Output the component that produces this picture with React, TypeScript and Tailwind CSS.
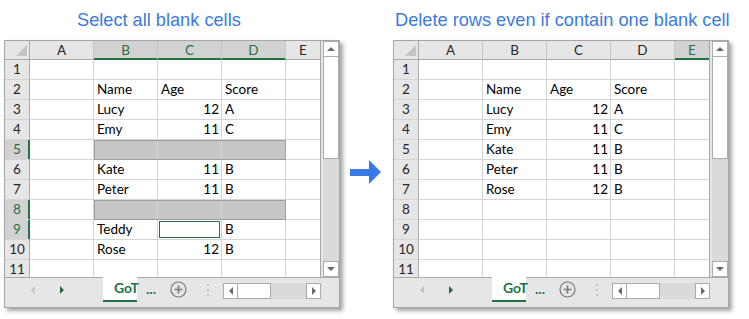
import clsx from 'clsx';

type Cell = string | number | null;

const COLS = ['A', 'B', 'C', 'D', 'E'];

interface SheetProps {
  data: Record<number, Cell[]>;
  selCols?: string[];
  selRows?: number[];
  grayRows?: number[];
  active?: { row: number; col: number };
}

function Tri({ dir, color }: { dir: 'left' | 'right' | 'up' | 'down'; color: string }) {
  const paths = { left: 'M4 0L0 4L4 8Z', right: 'M0 0L4 4L0 8Z', up: 'M0 4L4 0L8 4Z', down: 'M0 0L8 0L4 4Z' };
  const horiz = dir === 'left' || dir === 'right';
  return (
    <svg width={horiz ? 4 : 8} height={horiz ? 8 : 4} viewBox={horiz ? '0 0 4 8' : '0 0 8 4'}>
      <path d={paths[dir]} fill={color} />
    </svg>
  );
}

function Sheet({ data, selCols = [], selRows = [], grayRows = [], active }: SheetProps) {
  const rows = Array.from({ length: 11 }, (_, i) => i + 1);

  return (
    <div className="w-[336px] h-[268px] border border-[#a6a6a6] bg-[#e6e6e6] shadow-[3px_3px_4px_rgba(0,0,0,0.35)] flex flex-col">
      <div className="flex h-[236px]">
        {/* grid */}
        <div className="w-[316px] h-full overflow-hidden bg-white border-r border-[#a6a6a6] text-[13.5px]">
          {/* column headers */}
          <div className="flex h-[19px]">
            <div className="w-[25px] shrink-0 bg-[#e6e6e6] border-r border-b border-[#ababab] flex items-end justify-end pr-[2px] pb-[3px]">
              <svg width="11" height="11" viewBox="0 0 11 11">
                <path d="M11 0L11 11L0 11Z" fill="#c3c3c3" />
              </svg>
            </div>
            {COLS.map((c, i) => {
              const sel = selCols.includes(c);
              return (
                <div
                  key={c}
                  className={clsx(
                    'shrink-0 border-b flex justify-center leading-[18px]',
                    i < 4 ? 'w-[64px] border-r border-[#c6c6c6]' : 'w-[34px] border-[#c6c6c6]',
                    sel
                      ? 'bg-[#d2d2d2] text-[#217346] border-b-[#217346] shadow-[inset_0_-1px_0_#217346]'
                      : 'bg-[#e6e6e6] text-[#262626] border-b-[#ababab]'
                  )}
                >
                  {c}
                </div>
              );
            })}
          </div>

          {rows.map(r => {
            const sel = selRows.includes(r);
            const gray = grayRows.includes(r);
            const vals = data[r] || [];
            return (
              <div key={r} className="relative flex h-[20px]">
                <div
                  className={clsx(
                    'w-[25px] shrink-0 border-r border-b border-[#d4d4d4] text-center leading-[19px]',
                    sel
                      ? 'bg-[#d2d2d2] text-[#217346] border-r-[#217346] shadow-[inset_-1px_0_0_#217346]'
                      : 'bg-[#e6e6e6] text-[#262626] border-r-[#ababab]'
                  )}
                >
                  {r}
                </div>
                {COLS.map((_, ci) => {
                  const v = vals[ci] ?? null;
                  const isNum = typeof v === 'number';
                  const isActive = active && active.row === r && active.col === ci;
                  return (
                    <div
                      key={ci}
                      className={clsx(
                        'shrink-0 border-b border-[#d4d4d4] leading-[19px] text-black whitespace-nowrap overflow-hidden',
                        ci < 4 ? 'w-[64px] border-r' : 'w-[34px]',
                        isNum ? 'text-right pr-[2px]' : 'pl-[3px]',
                        gray && ci > 0 && ci < 4 && 'bg-[#c6c6c6]',
                        isActive && 'shadow-[inset_0_0_0_1px_#fff,inset_0_0_0_2px_#217346]'
                      )}
                    >
                      {v ?? ''}
                    </div>
                  );
                })}
                {gray && (
                  <div className="absolute left-[89px] top-0 w-[192px] h-[20px] border border-[#9e9e9e] pointer-events-none" />
                )}
              </div>
            );
          })}
        </div>

        {/* vertical scrollbar */}
        <div className="ml-[2px] w-[16px] flex flex-col">
          <div className="h-[16px] border border-[#ababab] bg-white flex items-center justify-center">
            <Tri dir="up" color="#6a6a6a" />
          </div>
          <div className="h-[102px] border-x border-b border-[#ababab] bg-white" />
          <div className="flex-1 bg-[#dadada]" />
          <div className="h-[16px] border border-[#ababab] bg-white flex items-center justify-center">
            <Tri dir="down" color="#6a6a6a" />
          </div>
        </div>
      </div>

      {/* sheet tab bar */}
      <div className="h-[30px] border-t border-[#ababab] flex items-start font-['Lato',sans-serif]">
        <div className="ml-[26px] mt-[8px] flex">
          <Tri dir="left" color="#c4c4c4" />
        </div>
        <div className="ml-[25px] mt-[8px] flex">
          <Tri dir="right" color="#1e6b3c" />
        </div>
        <div className="ml-[39px] -mt-px h-[25px] w-[34px] shrink-0 bg-white border-b-2 border-[#217346] pl-[11px] text-[14px] font-bold leading-[22px] text-[#217346] whitespace-nowrap">
          GoT
        </div>
        <span className="ml-[9px] w-[12px] shrink-0 text-[14px] font-bold leading-[22px] text-[#217346]">...</span>
        <svg className="ml-[12px] mt-[3px] shrink-0" width="17" height="17" viewBox="0 0 17 17">
          <circle cx="8.5" cy="8.5" r="7.5" fill="none" stroke="#7a7a7a" strokeWidth="1.2" />
          <path d="M8.5 4.5V12.5M4.5 8.5H12.5" stroke="#7a7a7a" strokeWidth="1.6" />
        </svg>
        <div className="ml-[20px] mt-[6px] flex flex-col gap-[3px]">
          <div className="w-[2px] h-[2px] bg-[#c0c0c0]" />
          <div className="w-[2px] h-[2px] bg-[#c0c0c0]" />
          <div className="w-[2px] h-[2px] bg-[#c0c0c0]" />
        </div>
        <div className="ml-[14px] mt-[5px] h-[16px] flex">
          <div className="w-[15px] h-full border border-[#ababab] bg-white flex items-center justify-center">
            <Tri dir="left" color="#6a6a6a" />
          </div>
          <div className="w-[33px] h-full border-y border-r border-[#ababab] bg-white" />
          <div className="w-[35px] h-full bg-[#dadada]" />
          <div className="w-[15px] h-full border border-[#ababab] bg-white flex items-center justify-center">
            <Tri dir="right" color="#6a6a6a" />
          </div>
        </div>
      </div>
    </div>
  );
}

const before: Record<number, Cell[]> = {
  2: [null, 'Name', 'Age', 'Score'],
  3: [null, 'Lucy', 12, 'A'],
  4: [null, 'Emy', 11, 'C'],
  6: [null, 'Kate', 11, 'B'],
  7: [null, 'Peter', 11, 'B'],
  9: [null, 'Teddy', null, 'B'],
  10: [null, 'Rose', 12, 'B'],
};

const after: Record<number, Cell[]> = {
  2: [null, 'Name', 'Age', 'Score'],
  3: [null, 'Lucy', 12, 'A'],
  4: [null, 'Emy', 11, 'C'],
  5: [null, 'Kate', 11, 'B'],
  6: [null, 'Peter', 11, 'B'],
  7: [null, 'Rose', 12, 'B'],
};

export default function App() {
  return (
    <div className="w-[749px] h-[319px] bg-white flex overflow-hidden font-['Lato',sans-serif]">
      <div className="w-[345px] shrink-0 pl-[4px]">
        <div className="h-[40px] pt-[10px] pl-[73px] font-['Liberation_Sans',Arial,sans-serif] text-[18.2px] leading-[20px] text-[#3b7be0] whitespace-nowrap">
          Select all blank cells
        </div>
        <Sheet data={before} selCols={['B', 'C', 'D']} selRows={[5, 8, 9]} grayRows={[5, 8]} active={{ row: 9, col: 2 }} />
      </div>

      <div className="w-[48px] shrink-0 pt-[160px] pl-[5px]">
        <svg width="32" height="24" viewBox="0 0 32 24">
          <rect x="0" y="9" width="20" height="7" fill="#3b78e7" />
          <path d="M19 0L31 12L19 24Z" fill="#3b78e7" />
        </svg>
      </div>

      <div className="flex-1">
        <div className="h-[40px] pt-[10px] pl-[2px] font-['Liberation_Sans',Arial,sans-serif] text-[18.2px] leading-[20px] text-[#3b7be0] whitespace-nowrap">
          Delete rows even if contain one blank cell
        </div>
        <Sheet data={after} selCols={['E']} />
      </div>
    </div>
  );
}
